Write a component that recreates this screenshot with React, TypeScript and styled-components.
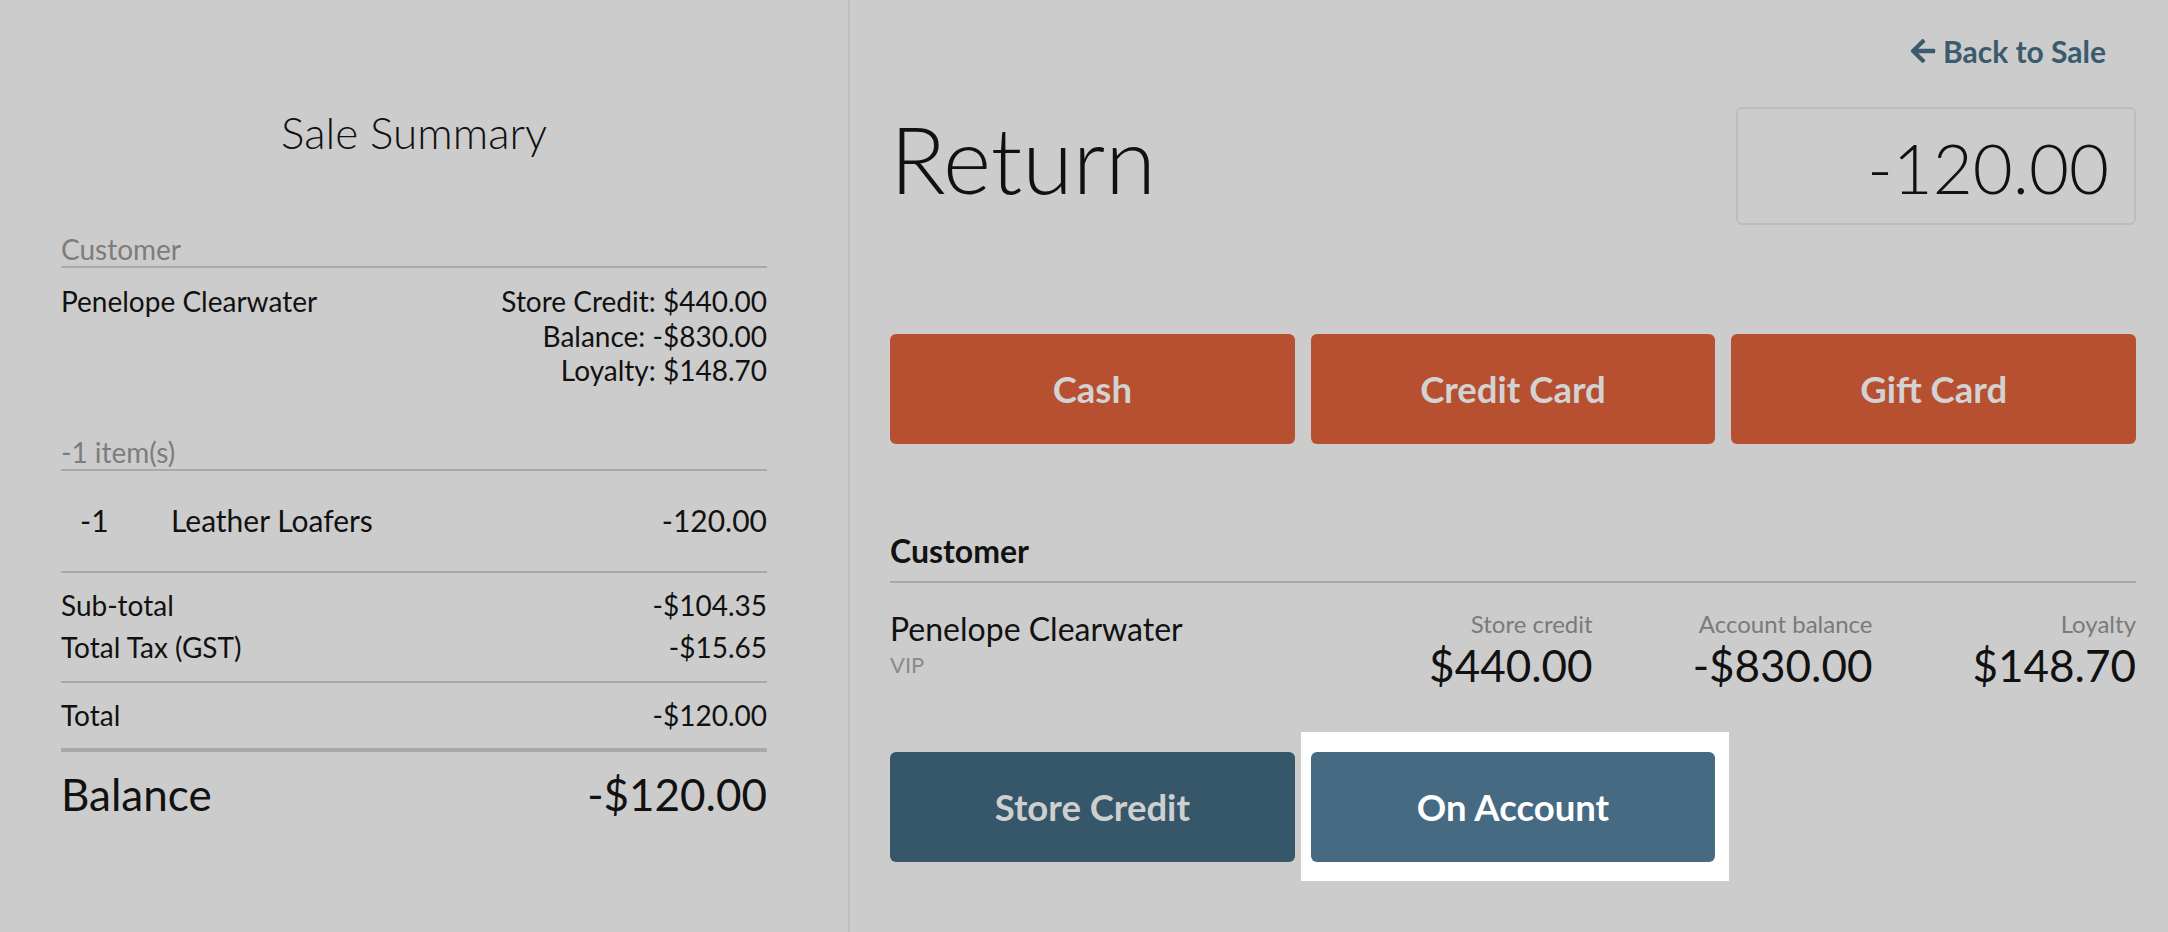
import React from "react";
import styled, { createGlobalStyle } from "styled-components";
import { FaArrowLeft } from "react-icons/fa";

const GlobalStyle = createGlobalStyle`
  html, body { margin: 0; padding: 0; background: #cccccc; }
  body { font-family: Lato, "Open Sans", Arial, sans-serif; color: #111; }
  * { box-sizing: border-box; }
`;

const Page = styled.div`
  display: flex;
  width: 2168px;
  height: 932px;
  background: #cccccc;
  overflow: hidden;
`;

const LeftPanel = styled.aside`
  width: 850px;
  flex: none;
  border-right: 2px solid #bfbfbf;
  padding: 107px 81px 0 61px;
  display: flex;
  flex-direction: column;
`;

const Title = styled.h1`
  margin: 0;
  font-weight: 300;
  font-size: 44px;
  line-height: 50px;
  text-align: center;
  color: #111;
`;

const SectionLabel = styled.div<{ $gap: number }>`
  margin-top: ${(p) => p.$gap}px;
  font-size: 28px;
  line-height: 34px;
  color: #7d7d7d;
  border-bottom: 2px solid #a9a9a9;
`;

const CustomerRow = styled.div`
  display: flex;
  justify-content: space-between;
  margin-top: 16px;
  font-size: 28px;
  line-height: 34.5px;
`;

const RightStack = styled.div`
  display: flex;
  flex-direction: column;
  align-items: flex-end;
`;

const ItemRow = styled.div`
  display: flex;
  align-items: baseline;
  padding: 32px 0 34px;
  font-size: 30px;
  line-height: 34px;
  border-bottom: 2px solid #a9a9a9;
`;

const Qty = styled.span`
  width: 110px;
  padding-left: 19px;
  flex: none;
`;

const ItemName = styled.span`
  flex: 1;
`;

const TotalsBlock = styled.div<{ $thick?: boolean }>`
  padding: 11px 0 ${(p) => (p.$thick ? 12 : 13)}px;
  border-bottom: ${(p) => (p.$thick ? 4 : 2)}px solid #a9a9a9;
`;

const TotalLine = styled.div`
  display: flex;
  justify-content: space-between;
  font-size: 28px;
  line-height: 42px;
`;

const BalanceLine = styled.div`
  display: flex;
  justify-content: space-between;
  margin-top: 17px;
  font-size: 44px;
  line-height: 50px;
`;

const RightPanel = styled.main`
  flex: 1;
  padding: 34px 32px 0 40px;
  display: flex;
  flex-direction: column;
`;

const BackRow = styled.div`
  display: flex;
  justify-content: flex-end;
  padding-right: 30px;
`;

const BackLink = styled.a`
  display: flex;
  align-items: center;
  gap: 6px;
  font-size: 30px;
  line-height: 34px;
  font-weight: 700;
  color: #3a5a6e;
  text-decoration: none;
  cursor: pointer;
`;

const Header = styled.div`
  display: flex;
  justify-content: space-between;
  align-items: flex-start;
  margin-top: 39px;
`;

const BigTitle = styled.h2`
  margin: 6px 0 0;
  font-size: 92px;
  line-height: 92px;
  font-weight: 300;
  color: #111;
`;

const AmountBox = styled.div`
  width: 400px;
  height: 118px;
  border: 2px solid #bdbdbd;
  border-radius: 6px;
  display: flex;
  align-items: center;
  justify-content: flex-end;
  padding: 4px 25px 0 0;
  font-size: 69px;
  line-height: 70px;
  font-weight: 300;
  color: #111;
`;

const ButtonGrid = styled.div<{ $gap: number }>`
  display: grid;
  grid-template-columns: repeat(3, 1fr);
  gap: 16px;
  margin-top: ${(p) => p.$gap}px;
`;

type Tone = "orange" | "dark" | "blue";

const toneBg: Record<Tone, string> = {
  orange: "#b75030",
  dark: "#36566a",
  blue: "#456a82",
};

const toneFg: Record<Tone, string> = {
  orange: "#d2d2d2",
  dark: "#cfcfcf",
  blue: "#ffffff",
};

const PayButton = styled.button<{ $tone: Tone }>`
  position: relative;
  height: 110px;
  border: none;
  border-radius: 6px;
  background: ${(p) => toneBg[p.$tone]};
  color: ${(p) => toneFg[p.$tone]};
  font-family: Lato, "Open Sans", Arial, sans-serif;
  font-size: 36.5px;
  font-weight: 700;
  cursor: pointer;
`;

const Spotlight = styled.div`
  position: relative;
  display: grid;
  &::before {
    content: "";
    position: absolute;
    top: -20px;
    left: -10px;
    right: -14px;
    bottom: -19px;
    background: #ffffff;
  }
`;

const CustomerHeading = styled.div`
  margin-top: 89px;
  padding-bottom: 12px;
  font-size: 32px;
  line-height: 36px;
  font-weight: 700;
  border-bottom: 2px solid #a9a9a9;
`;

const InfoRow = styled.div`
  display: flex;
  align-items: flex-start;
  gap: 100px;
  padding-top: 27px;
`;

const NameBlock = styled.div`
  flex: 1;
  padding-top: 1px;
  display: flex;
  flex-direction: column;
`;

const Name = styled.div`
  font-size: 32px;
  line-height: 36px;
`;

const Sub = styled.div`
  margin-top: 4px;
  font-size: 22px;
  line-height: 28px;
  color: #8a8a8a;
`;

const Stat = styled.div`
  display: flex;
  flex-direction: column;
  align-items: flex-end;
`;

const StatLabel = styled.div`
  font-size: 24px;
  line-height: 28px;
  color: #7a7a7a;
`;

const StatValue = styled.div`
  margin-top: 3px;
  font-size: 44px;
  line-height: 48px;
`;

export default function App() {
  return (
    <Page>
      <GlobalStyle />
      <LeftPanel>
        <Title>Sale Summary</Title>
        <SectionLabel $gap={75}>Customer</SectionLabel>
        <CustomerRow>
          <span>Penelope Clearwater</span>
          <RightStack>
            <span>Store Credit: $440.00</span>
            <span>Balance: -$830.00</span>
            <span>Loyalty: $148.70</span>
          </RightStack>
        </CustomerRow>
        <SectionLabel $gap={47}>-1 item(s)</SectionLabel>
        <ItemRow>
          <Qty>-1</Qty>
          <ItemName>Leather Loafers</ItemName>
          <span>-120.00</span>
        </ItemRow>
        <TotalsBlock>
          <TotalLine>
            <span>Sub-total</span>
            <span>-$104.35</span>
          </TotalLine>
          <TotalLine>
            <span>Total Tax (GST)</span>
            <span>-$15.65</span>
          </TotalLine>
        </TotalsBlock>
        <TotalsBlock $thick>
          <TotalLine>
            <span>Total</span>
            <span>-$120.00</span>
          </TotalLine>
        </TotalsBlock>
        <BalanceLine>
          <span>Balance</span>
          <span>-$120.00</span>
        </BalanceLine>
      </LeftPanel>

      <RightPanel>
        <BackRow>
          <BackLink>
            <FaArrowLeft size={28} />
            Back to Sale
          </BackLink>
        </BackRow>
        <Header>
          <BigTitle>Return</BigTitle>
          <AmountBox>-120.00</AmountBox>
        </Header>
        <ButtonGrid $gap={109}>
          <PayButton $tone="orange">Cash</PayButton>
          <PayButton $tone="orange">Credit Card</PayButton>
          <PayButton $tone="orange">Gift Card</PayButton>
        </ButtonGrid>
        <CustomerHeading>Customer</CustomerHeading>
        <InfoRow>
          <NameBlock>
            <Name>Penelope Clearwater</Name>
            <Sub>VIP</Sub>
          </NameBlock>
          <Stat>
            <StatLabel>Store credit</StatLabel>
            <StatValue>$440.00</StatValue>
          </Stat>
          <Stat>
            <StatLabel>Account balance</StatLabel>
            <StatValue>-$830.00</StatValue>
          </Stat>
          <Stat>
            <StatLabel>Loyalty</StatLabel>
            <StatValue>$148.70</StatValue>
          </Stat>
        </InfoRow>
        <ButtonGrid $gap={63}>
          <PayButton $tone="dark">Store Credit</PayButton>
          <Spotlight>
            <PayButton $tone="blue">On Account</PayButton>
          </Spotlight>
        </ButtonGrid>
      </RightPanel>
    </Page>
  );
}
